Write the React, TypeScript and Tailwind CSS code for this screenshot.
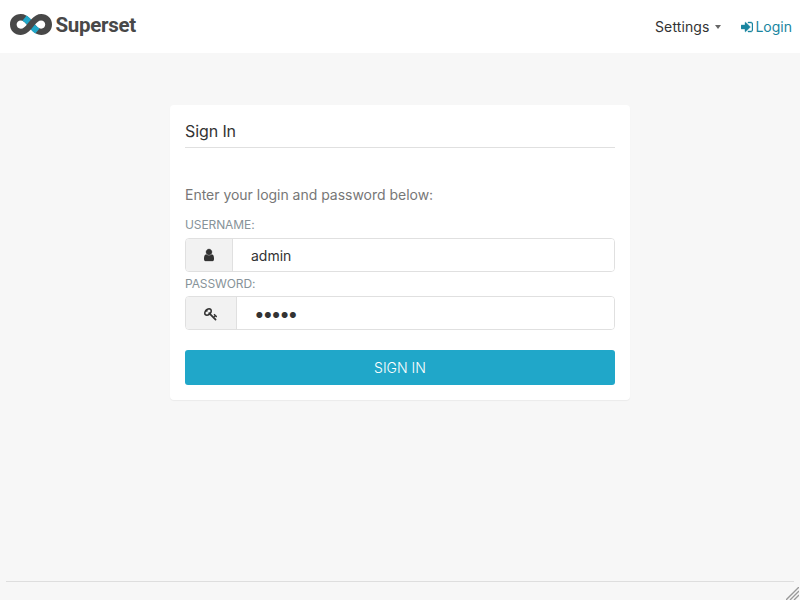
import React from "react";

function Logo() {
  return (
    <a className="flex items-start" aria-label="Superset">
      <svg className="h-[21px] w-[42px] shrink-0" viewBox="17.72 15.2 75.46 37.5" preserveAspectRatio="none">
        <path
          fill="#484848"
          fillRule="evenodd"
          d="M73.79,15.23C67.32,15.23 61.36,18.87 55.6,25.23C49.94,18.77 43.88,15.23 37.11,15.23C25.9,15.23 17.72,23.23 17.72,34C17.72,44.77 25.9,52.67 37.11,52.67C44,52.67 49.34,49.44 55.3,43C61.06,49.46 66.92,52.69 73.79,52.69C85,52.67 93.18,44.8 93.18,34C93.18,23.2 85,15.23 73.79,15.23ZM37.19,41.37C32.44,41.37 29.61,38.24 29.61,34.1C29.61,29.96 32.44,26.74 37.19,26.74C41.19,26.74 44.46,29.96 48,34.3C44.66,38.34 41.13,41.37 37.19,41.37ZM73.45,41.37C69.51,41.37 66.18,38.24 62.64,34.1C66.28,29.76 69.41,26.74 73.45,26.74C78.2,26.74 81,30 81,34.1C81,38.2 78.2,41.37 73.45,41.37Z"
        />
        <path fill="#20a7c9" d="M55.6,25.22C53.3,22.5 50.8,20.1 47.7,18L40,27.2C43,28.5 45.5,31.1 48,34.1Z" />
        <path fill="#20a7c9" d="M55.3,43C57.7,45.8 60.2,48.2 63.2,50.2L70.9,41C67.8,39.7 65.2,37.1 62.64,34.1Z" />
      </svg>
      <span className="-mt-px ml-[3.5px] font-['Roboto'] text-[20.5px] leading-6 font-bold tracking-[-0.3px] text-[#484848]">Superset</span>
    </a>
  );
}

function SignInIcon() {
  return (
    <svg className="h-3.5 w-3 fill-current stroke-current stroke-[50]" viewBox="0 0 1536 1792">
      <path d="M1184 896q0 26-19 45l-544 544q-19 19-45 19t-45-19-19-45v-288h-448q-26 0-45-19t-19-45v-384q0-26 19-45t45-19h448v-288q0-26 19-45t45-19 45 19l544 544q19 19 19 45zm352-352v704q0 119-84.5 203.5t-203.5 84.5h-320q-13 0-22.5-9.5t-9.5-22.5q-1-4-1-20t.5-26.5 3-23.5 10-19.5 20.5-6.5h320q66 0 113-47t47-113v-704q0-66-47-113t-113-47h-312l-11.5-1-11.5-3-8-5.5-7-9-2-13.5q-1-4-1-20t.5-26.5 3-23.5 10-19.5 20.5-6.5h320q119 0 203.5 84.5t84.5 203.5z" />
    </svg>
  );
}

function UserIcon() {
  return (
    <svg className="h-3.5 w-2.5 fill-[#333] stroke-[#333] stroke-[40]" viewBox="0 0 1280 1792">
      <path d="M1280 1399q0 109-62.5 187t-150.5 78h-854q-88 0-150.5-78t-62.5-187q0-85 8.5-160.5t31.5-152 58.5-131 94-89 134.5-34.5q131 128 313 128t313-128q76 0 134.5 34.5t94 89 58.5 131 31.5 152 8.5 160.5zm-256-887q0 159-112.5 271.5t-271.5 112.5-271.5-112.5-112.5-271.5 112.5-271.5 271.5-112.5 271.5 112.5 112.5 271.5z" />
    </svg>
  );
}

function KeyIcon() {
  return (
    <svg className="mt-px size-3.5 fill-[#333]" viewBox="0 0 1792 1792">
      <path d="M832 512q0-80-56-136t-136-56-136 56-56 136q0 42 19 83-41-19-83-19-80 0-136 56t-56 136 56 136 136 56 136-56 56-136q0-42-19-83 41 19 83 19 80 0 136-56t56-136zm851 704q0 17-49 66t-66 49q-9 0-28.5-16t-36.5-33-38.5-40-24.5-26l-96 96 220 220q28 28 28 68 0 42-39 81t-81 39q-40 0-68-28l-671-671q-176 131-365 131-163 0-265.5-102.5t-102.5-265.5q0-160 95-313t248-248 313-95q163 0 265.5 102.5t102.5 265.5q0 189-131 365l355 355 96-96q-3-3-26-24.5t-40-38.5-33-36.5-16-28.5q0-17 49-66t66-49q13 0 23 10 6 6 46 44.5t82 79.5 86.5 86 73 78 28.5 41z" />
    </svg>
  );
}

export default function App() {
  return (
    <div className="flex h-[600px] w-[800px] flex-col overflow-hidden bg-[#f7f7f7] font-['Inter',sans-serif] text-sm text-[#333]">
      <header className="flex h-[53px] shrink-0 justify-between bg-white pt-[14px] pr-2 pl-2.5">
        <div className="h-[21px]">
          <Logo />
        </div>
        <nav className="flex h-[26px] items-center leading-5">
          <span className="tracking-[0.1px]">Settings</span>
          <span className="ml-[5.5px] border-x-[3px] border-t-4 border-x-transparent border-t-[#666]" />
          <a className="ml-5 flex items-center gap-[2.5px] text-[#1985a0]">
            <SignInIcon />
            <span>Login</span>
          </a>
        </nav>
      </header>

      <main className="mx-auto mt-[52px] h-[295px] w-[460px] shrink-0 rounded-[4px] bg-white px-[15px] pt-[15px] shadow-[0_1px_1px_rgba(0,0,0,0.05)]">
        <h1 className="h-7 border-b border-[#e0e0e0] text-base leading-[22px] tracking-[-0.1px]">Sign In</h1>
        <p className="mt-[37px] leading-5 tracking-[-0.02px] text-[#777]">Enter your login and password below:</p>
        <label className="mt-[11px] block text-xs leading-[17px] tracking-[-0.1px] text-[#879399]">USERNAME:</label>
        <div className="mt-[5px] flex h-[34px] overflow-hidden rounded-[4px] border border-[#e0e0e0]">
          <span className="flex w-[47px] items-center justify-center border-r border-[#e0e0e0] bg-[#f2f2f2]">
            <UserIcon />
          </span>
          <input className="min-w-0 flex-1 bg-white pt-0.5 pl-[18px] outline-none" defaultValue="admin" />
        </div>
        <label className="mt-[3px] block text-xs leading-[17px] tracking-[-0.1px] text-[#879399]">PASSWORD:</label>
        <div className="mt-1 flex h-[34px] overflow-hidden rounded-[4px] border border-[#e0e0e0]">
          <span className="flex w-[51px] items-center justify-center border-r border-[#e0e0e0] bg-[#f2f2f2]">
            <KeyIcon />
          </span>
          <input
            type="password"
            className="min-w-0 flex-1 bg-white pt-1 pl-[17px] text-[19px] tracking-[-2.3px] outline-none"
            defaultValue="admin"
          />
        </div>
        <button className="mt-5 h-[35px] w-full rounded-[3px] bg-[#20a7c9] text-sm font-light text-white">SIGN IN</button>
      </main>

      <footer className="mx-1.5 mt-auto flex h-[19px] shrink-0 items-end justify-end border-t border-[#dedede]">
        <svg className="-mr-[5px] h-[13px] w-[13px] shrink-0" viewBox="0 0 13 13" stroke="#999" strokeWidth="1.4">
          <path d="M0 13L13 0M4 13L13 4M8 13L13 8" fill="none" />
        </svg>
      </footer>
    </div>
  );
}
